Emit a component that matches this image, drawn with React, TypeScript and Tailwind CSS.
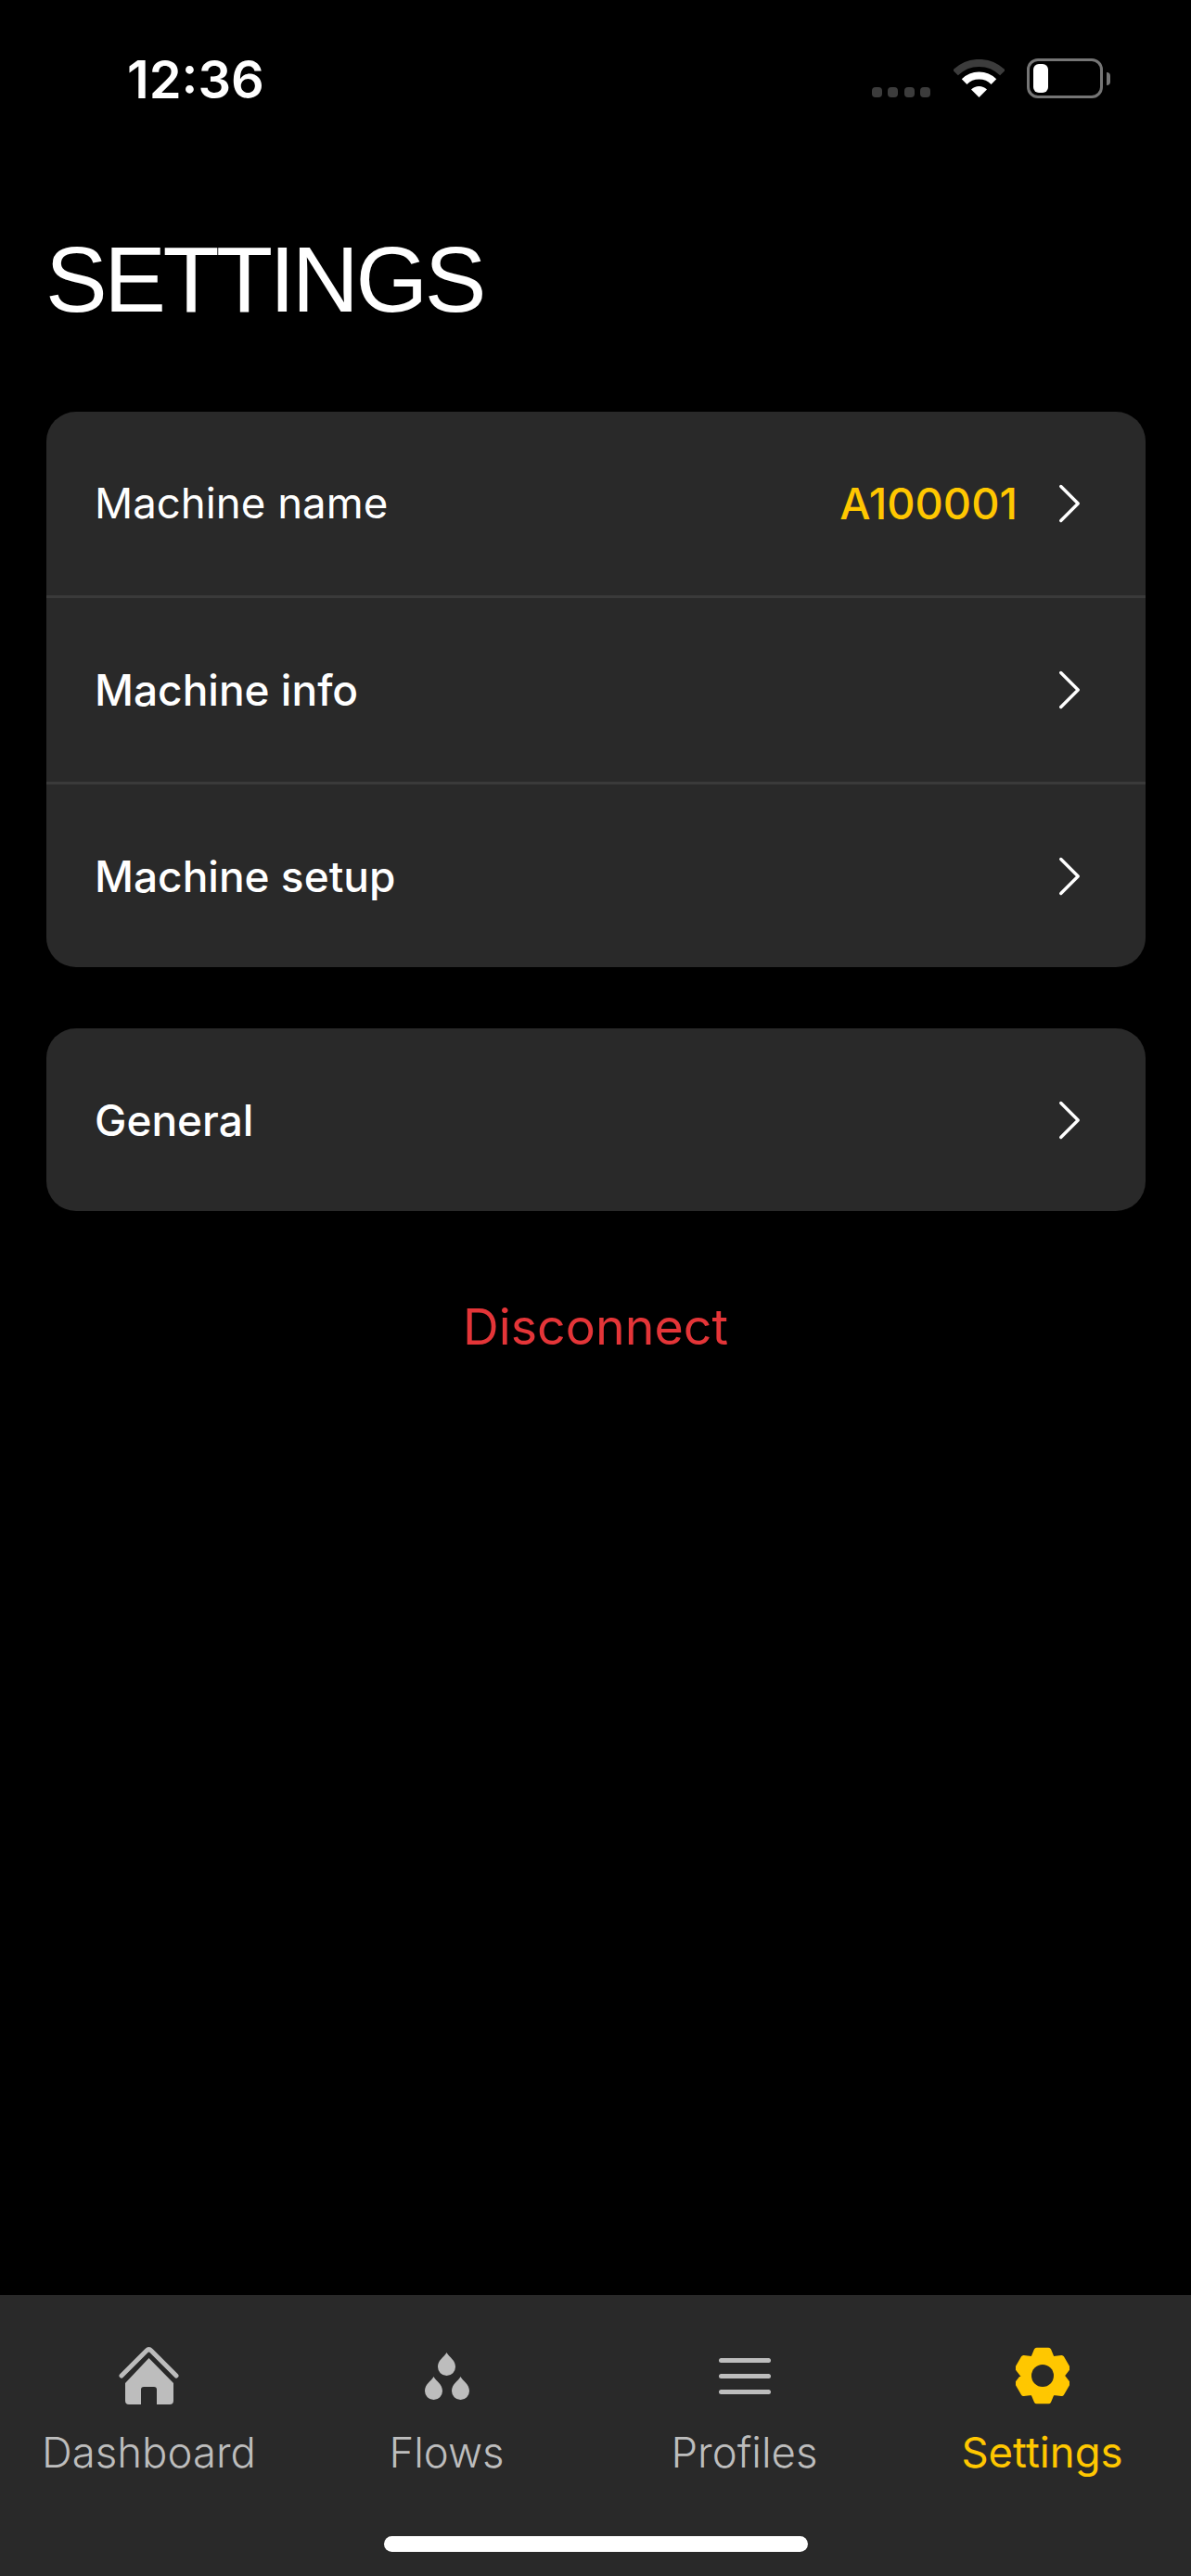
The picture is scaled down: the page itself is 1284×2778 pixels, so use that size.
import { ChevronRight } from "lucide-react";
import type { ReactNode } from "react";

function StatusBar() {
  return (
    <div className="flex h-[243px] items-start justify-between pl-[137px] pr-[87px] pt-[54px]">
      <span className="text-[56px] leading-[64px] font-semibold text-white">12:36</span>
      <div className="flex items-end pt-[9px]">
        <div className="mb-[1px] flex gap-[6.5px]">
          <span className="h-[11px] w-[11px] rounded-[4px] bg-[#3c3c3c]" />
          <span className="h-[11px] w-[11px] rounded-[4px] bg-[#3c3c3c]" />
          <span className="h-[11px] w-[11px] rounded-[4px] bg-[#3c3c3c]" />
          <span className="h-[11px] w-[11px] rounded-[4px] bg-[#3c3c3c]" />
        </div>
        <svg width="55" height="42" viewBox="0 0 55 42" className="ml-[25px]">
          <path d="M2 14.5A36 36 0 0 1 53 14.5" fill="none" stroke="#3c3c3c" strokeWidth="8" />
          <path d="M11.6 24.1A22.5 22.5 0 0 1 43.4 24.1" fill="none" stroke="#fff" strokeWidth="8" />
          <path d="M27.5 41L19 32.5A12 12 0 0 1 36 32.5Z" fill="#fff" />
        </svg>
        <div className="ml-[24px] flex items-center">
          <div className="flex h-[43px] w-[82px] items-center rounded-[12px] border-[3px] border-[#757575] pl-[4px]">
            <span className="h-[31px] w-[16px] rounded-[6px] bg-white" />
          </div>
          <span className="ml-[4px] h-[14px] w-[4px] rounded-r-full bg-[#757575]" />
        </div>
      </div>
    </div>
  );
}

function Row({ label, value, last, light }: { label: string; value?: string; last?: boolean; light?: boolean }) {
  return (
    <div
      className={
        last
          ? "flex h-[197px] items-center justify-between pl-[52px] pr-[45px]"
          : "flex h-[201px] items-center justify-between border-b-[3px] border-[#3a3a3a] pl-[52px] pr-[45px]"
      }
    >
      <span className={light ? "text-[45.6px] leading-[54px] text-white" : "text-[46px] leading-[54px] font-[450] text-white"}>{label}</span>
      <div className="flex items-center">
        {value && <span className="mr-[19px] text-[47px] leading-[54px] font-[450] text-[#ffc700]">{value}</span>}
        <ChevronRight className="-my-[10px] h-[74px] w-[74px] text-white" strokeWidth={1.1} />
      </div>
    </div>
  );
}

function HomeIcon() {
  return (
    <svg width="65" height="62" viewBox="0 0 65 62">
      <path d="M3 31L30 4Q32.5 1.5 35 4L62 31" fill="none" stroke="#bdbdbd" strokeWidth="5" strokeLinecap="round" />
      <path
        d="M32.5 12L59 39V58Q59 62 55 62H41V46Q41 43 38 43H27Q24 43 24 46V62H11Q7 62 7 58V39Z"
        fill="#bdbdbd"
      />
    </svg>
  );
}

function DropsIcon() {
  const drop = "c2.5 5 9.5 8 9.5 15.5a9.5 9.5 0 0 1-19 0c0-7.5 7-10.5 9.5-15.5z";
  return (
    <svg width="48" height="51" viewBox="0 0 48 51" fill="#bdbdbd">
      <path d={`M23.5 0${drop}`} />
      <path d={`M9.5 26${drop}`} />
      <path d={`M38.5 26${drop}`} />
    </svg>
  );
}

function MenuIcon() {
  return (
    <div className="flex h-[62px] w-[56px] flex-col justify-center gap-[12px]">
      <span className="h-[5px] rounded-full bg-[#bdbdbd]" />
      <span className="h-[5px] rounded-full bg-[#bdbdbd]" />
      <span className="h-[5px] rounded-full bg-[#bdbdbd]" />
    </div>
  );
}

// six wide lobes with shallow notches, rounded off by the stroke
function gearPoints() {
  const pts: string[] = [];
  const at = (deg: number, r: number) => {
    const a = (deg * Math.PI) / 180;
    return `${(29 + r * Math.cos(a)).toFixed(2)},${(31 + r * Math.sin(a)).toFixed(2)}`;
  };
  for (let k = 0; k < 6; k++) {
    const mid = -90 + 60 * k;
    pts.push(at(mid - 13, 28), at(mid + 13, 28), at(mid + 30, 20.5));
  }
  return pts.join(" ");
}

function GearIcon() {
  return (
    <svg width="58" height="62" viewBox="0 0 58 62">
      <polygon points={gearPoints()} fill="#ffc700" stroke="#ffc700" strokeWidth="6" strokeLinejoin="round" />
      <circle cx="29" cy="31" r="12" fill="#292929" />
    </svg>
  );
}

function Tab({ icon, label, active }: { icon: ReactNode; label: string; active?: boolean }) {
  return (
    <div className="flex flex-col items-center">
      <div className="flex h-[62px] items-center justify-center">{icon}</div>
      <span className={active ? "mt-[25px] text-[45.5px] leading-[53px] text-[#ffc700]" : "mt-[25px] text-[45.5px] leading-[53px] font-light text-[#bdbdbd]"}>
        {label}
      </span>
    </div>
  );
}

export default function App() {
  return (
    <div className="flex h-[2778px] w-[1284px] flex-col overflow-hidden bg-black font-['Inter',sans-serif]">
      <StatusBar />
      <h1 className="pl-[49px] font-['Liberation_Sans',sans-serif] text-[100px] leading-[116px] font-normal tracking-[-3.5px] text-white">SETTINGS</h1>
      <main className="mt-[85px] flex flex-col px-[50px]">
        <div className="w-[1185px] rounded-[32px] bg-[#292929]">
          <Row label="Machine name" value="A100001" light />
          <Row label="Machine info" />
          <Row label="Machine setup" last />
        </div>
        <div className="mt-[66px] w-[1185px] rounded-[32px] bg-[#292929]">
          <Row label="General" last />
        </div>
        <button className="mt-[95px] text-center text-[53.7px] leading-[60px] font-normal text-[#e43538]">Disconnect</button>
      </main>
      <nav className="relative mt-auto h-[303px] bg-[#292929] pt-[56px]">
        <div className="grid grid-cols-4">
          <Tab icon={<HomeIcon />} label="Dashboard" />
          <Tab icon={<DropsIcon />} label="Flows" />
          <Tab icon={<MenuIcon />} label="Profiles" />
          <Tab icon={<GearIcon />} label="Settings" active />
        </div>
        <div className="absolute bottom-[26px] left-[414px] h-[17px] w-[457px] rounded-full bg-white" />
      </nav>
    </div>
  );
}
